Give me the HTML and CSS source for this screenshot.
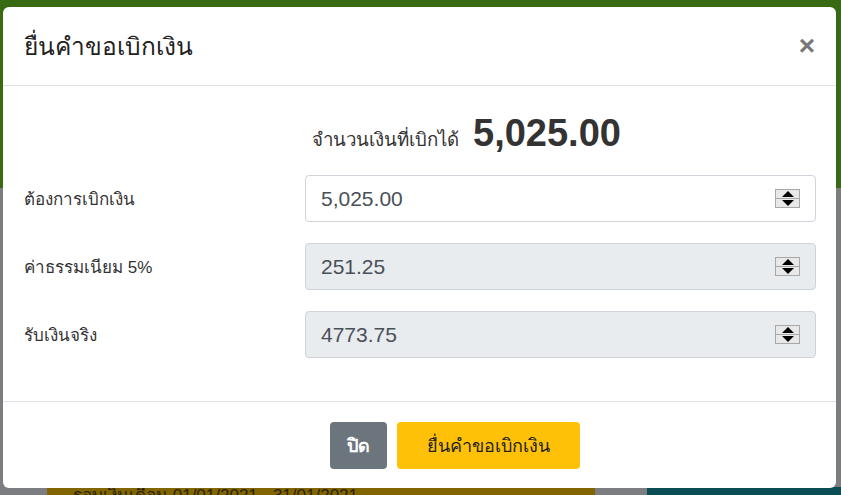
FILE: index.html
```
<!DOCTYPE html>
<html>
<head>
<title>ยื่นคำขอเบิกเงิน</title>
<meta charset="utf-8">
<link rel="stylesheet" href="styles.css">
</head>
<body>

<div class="page">
    <div class="page-head"></div>
    <div class="page-main">
        <div class="page-bar">
            <div class="bar-round">รอบเงินเดือน 01/01/2021 - 31/01/2021</div>
            <div class="bar-gap"></div>
            <div class="bar-teal"></div>
        </div>
    </div>
</div>

<div class="modal">
    <div class="modal-head">
        <h4 class="modal-title">ยื่นคำขอเบิกเงิน</h4>
        <span class="modal-close">&times;</span>
    </div>
    <div class="modal-body">
        <div class="amount">
            <span class="amount-label">จำนวนเงินที่เบิกได้</span>
            <span class="amount-value">5,025.00</span>
        </div>
        <div class="row">
            <label class="row-label">ต้องการเบิกเงิน</label>
            <div class="field">
                <input class="field-input" type="text" value="5,025.00">
                <span class="spin"><i class="up"></i><i class="down"></i></span>
            </div>
        </div>
        <div class="row">
            <label class="row-label">ค่าธรรมเนียม 5%</label>
            <div class="field disabled">
                <input class="field-input" type="text" value="251.25" disabled>
                <span class="spin"><i class="up"></i><i class="down"></i></span>
            </div>
        </div>
        <div class="row">
            <label class="row-label">รับเงินจริง</label>
            <div class="field disabled">
                <input class="field-input" type="text" value="4773.75" disabled>
                <span class="spin"><i class="up"></i><i class="down"></i></span>
            </div>
        </div>
    </div>
    <div class="modal-foot">
        <button class="btn btn-close">ปิด</button>
        <button class="btn btn-submit">ยื่นคำขอเบิกเงิน</button>
    </div>
</div>

</body>
</html>
```

FILE: styles.css
```
*{margin:0;padding:0;box-sizing:border-box;}
body{font-family:"Liberation Sans",Arial,sans-serif;color:#333;overflow:hidden;}

.page{height:495px;display:flex;flex-direction:column;}
.page-head{height:188px;flex-shrink:0;background:#386913;}
.page-main{flex:1;background:#7b7d80;padding-top:299px;}
.page-bar{display:flex;height:8px;overflow:hidden;}
.bar-round{margin-left:47px;width:548px;background:#806500;color:#2b2200;font-size:17px;padding:0 26px;line-height:18px;white-space:nowrap;overflow:hidden;}
.bar-gap{width:52px;background:#7b7d80;}
.bar-teal{flex:1;background:#0b4d55;}

.modal{position:absolute;top:7px;left:3px;width:833px;height:481px;background:#fff;border-radius:6px;display:flex;flex-direction:column;}
.modal-head{height:79px;display:flex;align-items:center;justify-content:space-between;padding:0 21px;border-bottom:1px solid #dee2e6;}
.modal-title{font-size:24.5px;font-weight:normal;color:#222;}
.modal-close{font-size:28px;font-weight:bold;color:#777;line-height:1;}

.modal-body{flex:1;padding:0 20px 0 21px;}
.amount{display:flex;align-items:baseline;gap:14px;padding:26px 0 20px 288px;}
.amount-label{font-size:18.7px;color:#333;}
.amount-value{font-size:38px;font-weight:bold;color:#333;}

.row{display:flex;align-items:center;margin-bottom:21px;}
.row-label{width:281px;font-size:17px;color:#333;}
.field{flex:1;height:47px;display:flex;align-items:center;border:1px solid #ced4da;border-radius:4px;padding:0 15px;background:#fff;}
.field.disabled{background:#e9ecef;}
.field-input{flex:1;border:none;outline:none;background:transparent;font-family:"Liberation Sans",Arial,sans-serif;font-size:21px;color:#495057;}
.spin{width:25px;height:19px;display:flex;flex-direction:column;border:1px solid #a8a8a8;background:#e8e8e8;}
.spin i{flex:1;display:flex;align-items:center;justify-content:center;}
.spin .up{border-bottom:1px solid #a8a8a8;}
.spin .up::after{content:"";border-left:6px solid transparent;border-right:6px solid transparent;border-bottom:6px solid #000;}
.spin .down::after{content:"";border-left:6px solid transparent;border-right:6px solid transparent;border-top:6px solid #000;}

.modal-foot{height:87px;border-top:1px solid #dee2e6;display:flex;align-items:center;justify-content:center;gap:10px;padding-left:71px;}
.btn{height:47px;border:none;border-radius:4px;font-family:"Liberation Sans",Arial,sans-serif;font-size:18px;padding:0 19px;}
.btn-close{background:#6c757d;color:#fff;width:57px;padding:0;font-weight:bold;}
.btn-submit{background:#ffc107;color:#222;width:183px;}
```
